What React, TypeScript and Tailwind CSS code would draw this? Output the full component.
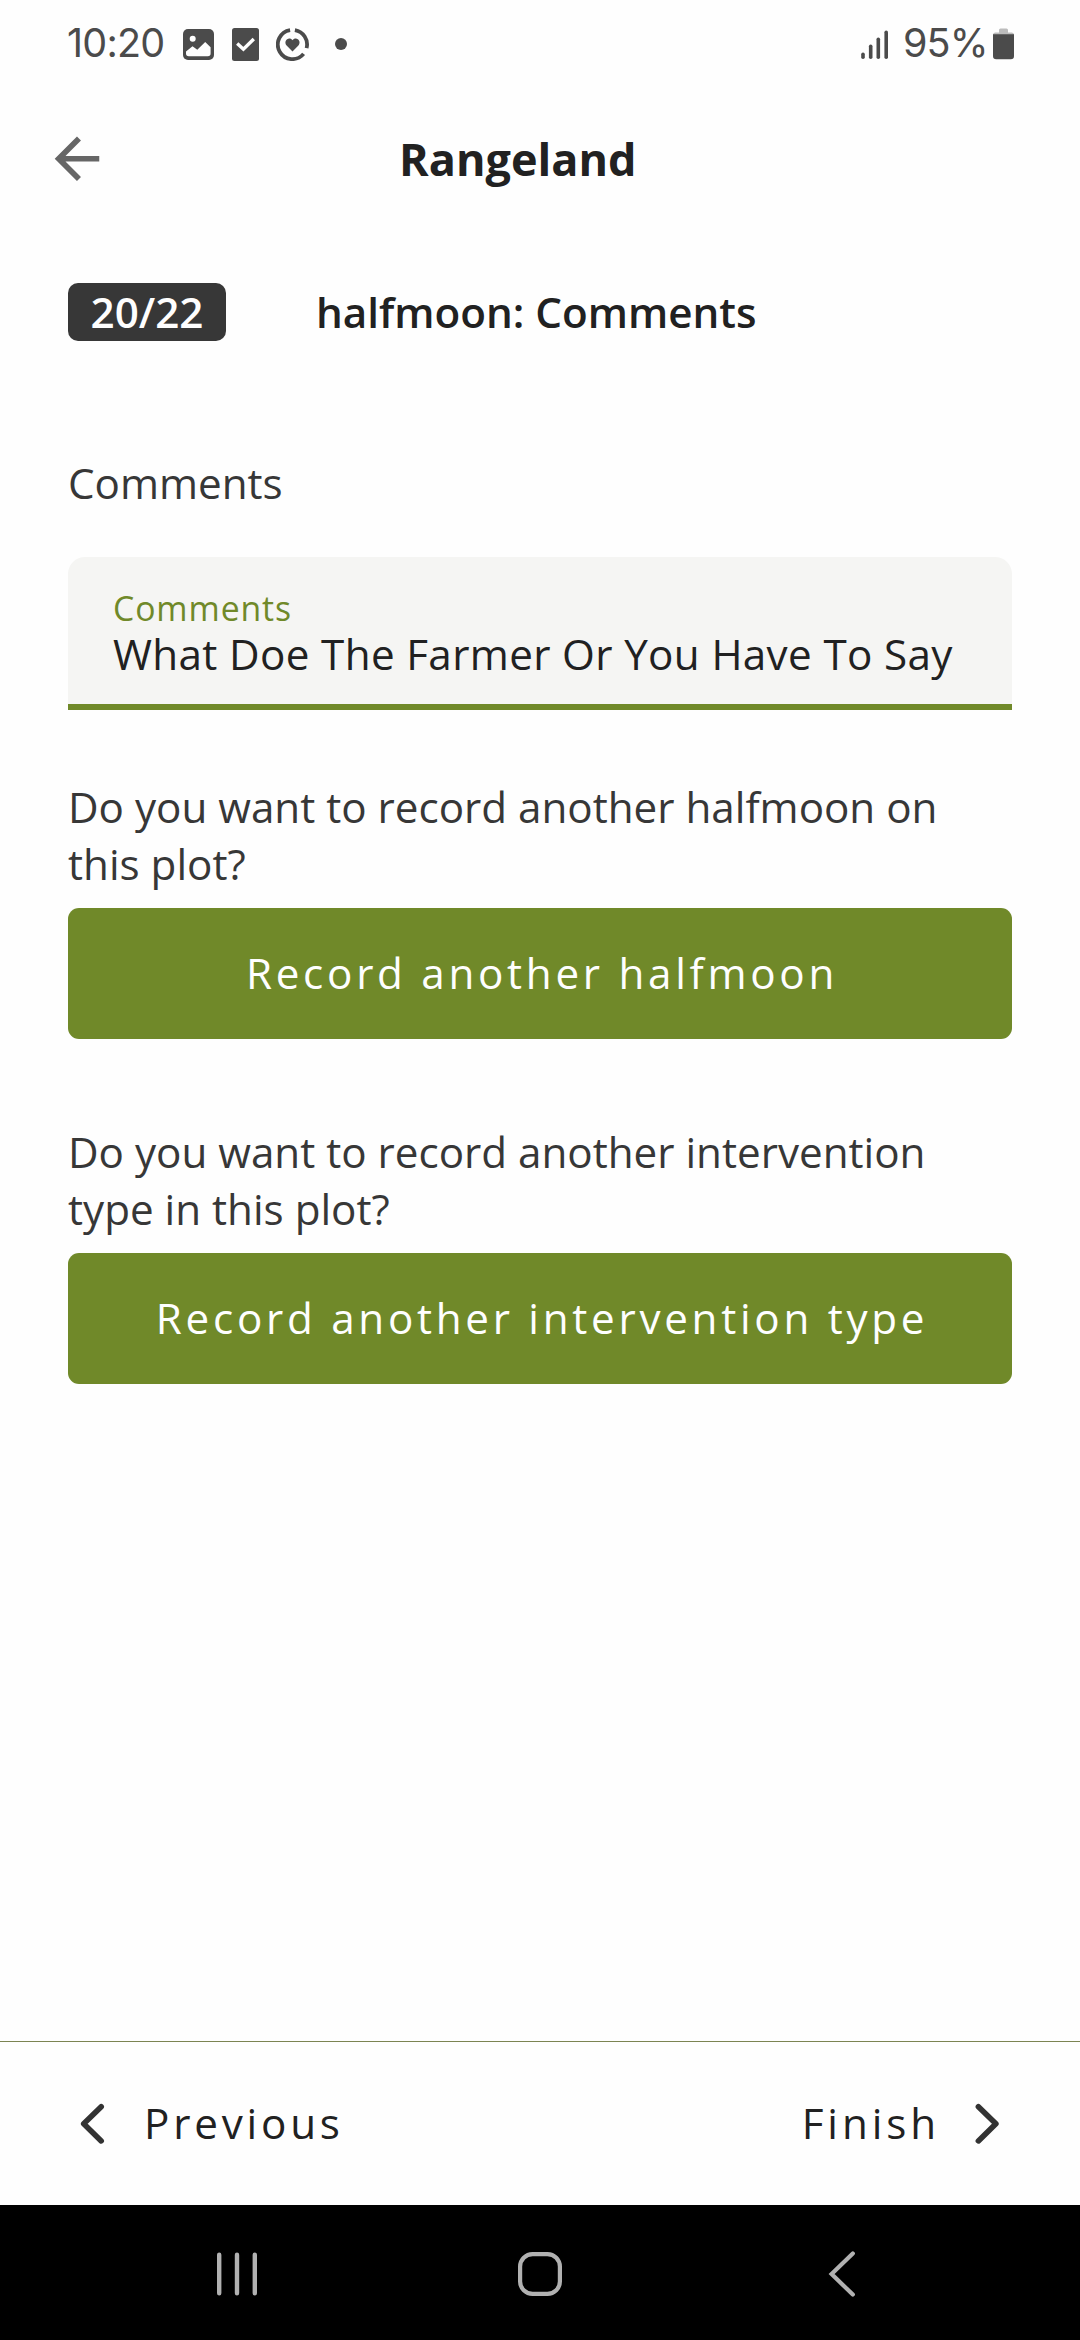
import type { ReactNode } from "react";

function StatusBar() {
  return (
    <div className="flex h-[88px] shrink-0 items-center pl-[67px] pr-[66px] font-['Inter',sans-serif] text-[39.5px] leading-none font-normal text-[#4b4b4b]">
      <span className="w-[116px] tracking-[-0.8px]">10:20</span>
      <svg className="mt-px size-[31px]" viewBox="0 0 31 31" fill="none">
        <rect width="31" height="31" rx="5" fill="#4b4b4b" />
        <circle cx="9.7" cy="9.7" r="3" fill="#fefefe" />
        <path
          d="M3 22.5 L9.5 17.2 L14.3 20.8 L22.2 13 L27.6 18.2 V24.5 Q27.6 27.3 24.8 27.3 H5.8 Q3 27.3 3 24.5 Z"
          fill="#fefefe"
        />
      </svg>
      <svg className="ml-[18px] h-[33px] w-[27px]" viewBox="0 0 27 33" fill="none">
        <rect width="27" height="33" rx="2.5" fill="#4b4b4b" />
        <path d="M5.2 15.6 L11.4 21.2 L21.8 11" stroke="#fefefe" strokeWidth="3.4" />
      </svg>
      <svg className="ml-[17px] size-[33px]" viewBox="0 0 33 33" fill="none">
        <g stroke="#4b4b4b" strokeWidth="3.8">
          <path d="M18.9 2.1 A14.6 14.6 0 0 1 30.6 20.1" />
          <path d="M14.1 2.1 A14.6 14.6 0 1 0 27.6 25.9" />
        </g>
        <path
          d="M16.5 23.4 L10.6 17.4 C8.8 15.4 9.2 12.4 11.2 11.2 C13 10.1 15.3 10.6 16.5 12.3 C17.7 10.6 20 10.1 21.8 11.2 C23.8 12.4 24.2 15.4 22.4 17.4 Z"
          fill="#4b4b4b"
        />
      </svg>
      <span className="ml-[26px] size-[12px] rounded-full bg-[#4b4b4b]" />

      <svg className="mt-[1px] ml-auto h-[30px] w-[28px]" viewBox="0 0 28 30" fill="none">
        <g stroke="#4b4b4b" strokeWidth="3.6" strokeLinecap="round">
          <path d="M2 24.3 V27.2" />
          <path d="M9.7 16.3 V27.2" />
          <path d="M17.3 9.2 V27.2" />
          <path d="M25.2 2.2 V27.2" />
        </g>
      </svg>
      <span className="ml-[14px] w-[90px] tracking-[-0.9px]">95%</span>
      <svg className="h-[32px] w-[21px]" viewBox="0 0 21 32" fill="none">
        <path d="M6 2 Q6 0.5 7.5 0.5 H13.5 Q15 0.5 15 2 V4.5 H18.5 Q21 4.5 21 7 H0 Q0 4.5 2.5 4.5 H6 Z" fill="#bcbcbc" />
        <path d="M0 6.3 H21 V28 Q21 31.2 17.8 31.2 H3.2 Q0 31.2 0 28 Z" fill="#4b4b4b" />
      </svg>
    </div>
  );
}

function Header() {
  return (
    <header className="flex h-[141px] shrink-0 items-center pl-[43px]">
      <svg className="size-[67.5px]" viewBox="0 0 24 24" fill="#666666">
        <path d="M20 11v2H8l5.5 5.5-1.42 1.42L4.16 12l7.92-7.92L13.5 5.5 8 11h12z" />
      </svg>
      <h1 className="ml-[288.5px] text-[45px] leading-[61px] font-bold text-[#212121]">Rangeland</h1>
    </header>
  );
}

function Question({ children }: { children: ReactNode }) {
  return <p className="text-[#373737]">{children}</p>;
}

function PrimaryButton({ children }: { children: ReactNode }) {
  return (
    <button className="mt-4 flex h-[131px] w-full items-center justify-center rounded-[11px] bg-[#708929] pb-[2px] pl-[4px] tracking-[3.72px] text-[#fefefe]">
      {children}
    </button>
  );
}

function Chevron({ d }: { d: string }) {
  return (
    <svg className="h-[50px] w-[50px]" viewBox="0 0 50 50" fill="none">
      <path d={d} stroke="#333333" strokeWidth="5.6" strokeLinecap="round" strokeLinejoin="round" />
    </svg>
  );
}

function SystemNav() {
  return (
    <nav className="flex h-[135px] shrink-0 items-center justify-between bg-black pt-[3px] pr-[214px] pl-[213px]">
      <svg className="size-[48px]" viewBox="0 0 48 48" fill="none" stroke="#b1b1b1" strokeWidth="4.4" strokeLinecap="round">
        <path d="M6.2 4.7V43.3M24 4.7V43.3M41.8 4.7V43.3" />
      </svg>
      <svg className="size-[48px]" viewBox="0 0 48 48" fill="none" stroke="#b1b1b1" strokeWidth="4.2">
        <rect x="4.1" y="4.1" width="39.8" height="39.8" rx="12.5" />
      </svg>
      <svg className="size-[48px]" viewBox="0 0 48 48" fill="none" stroke="#b1b1b1" strokeWidth="4.2" strokeLinecap="round">
        <path d="M34.8 3.4L13.6 24L34.8 44.6" />
      </svg>
    </nav>
  );
}

export default function App() {
  return (
    <div className="flex h-[2340px] w-[1080px] flex-col overflow-hidden bg-[#fefefe] font-['Open_Sans',sans-serif] text-[42.1875px] leading-[57px]">
      <StatusBar />
      <Header />

      <main className="flex-1 px-[68px] pt-[54px]">
        <div className="flex items-start gap-[90px] font-semibold">
          <span className="flex h-[58px] w-[158px] justify-center rounded-[10px] bg-[#373737] text-[#fefefe]">
            20/22
          </span>
          <h2 className="text-[#212121]">halfmoon: Comments</h2>
        </div>

        <p className="mt-[113px] text-[#373737]">Comments</p>

        <div className="mt-[46px] h-[153px] rounded-t-[17px] border-b-[6px] border-[#708929] bg-[#f5f5f3] px-[45px] pt-[31px]">
          <div className="text-[33.75px] leading-[40px] tracking-[0.9px] text-[#708929]">Comments</div>
          <div className="leading-[51px] tracking-[0.36px] whitespace-nowrap text-[#212121]">
            What Doe The Farmer Or You Have To Say
          </div>
        </div>

        <div className="mt-[68px]">
          <Question>
            Do you want to record another halfmoon on
            <br />
            this plot?
          </Question>
          <PrimaryButton>Record another halfmoon</PrimaryButton>
        </div>

        <div className="mt-[84px]">
          <Question>
            Do you want to record another intervention
            <br />
            type in this plot?
          </Question>
          <PrimaryButton>Record another intervention type</PrimaryButton>
        </div>
      </main>

      <footer className="flex h-[164px] shrink-0 items-center justify-between border-t border-[#7b8452] px-[68px] text-[#212121]">
        <button className="flex items-center gap-[26px]">
          <Chevron d="M33.2 7.7L15.7 24.8L33.2 41.9" />
          <span className="pb-[2px] tracking-[3.8px]">Previous</span>
        </button>
        <button className="flex items-center gap-[22px]">
          <span className="pb-[2px] tracking-[3.9px]">Finish</span>
          <Chevron d="M16.4 7.7L33.9 24.8L16.4 41.9" />
        </button>
      </footer>

      <SystemNav />
    </div>
  );
}
